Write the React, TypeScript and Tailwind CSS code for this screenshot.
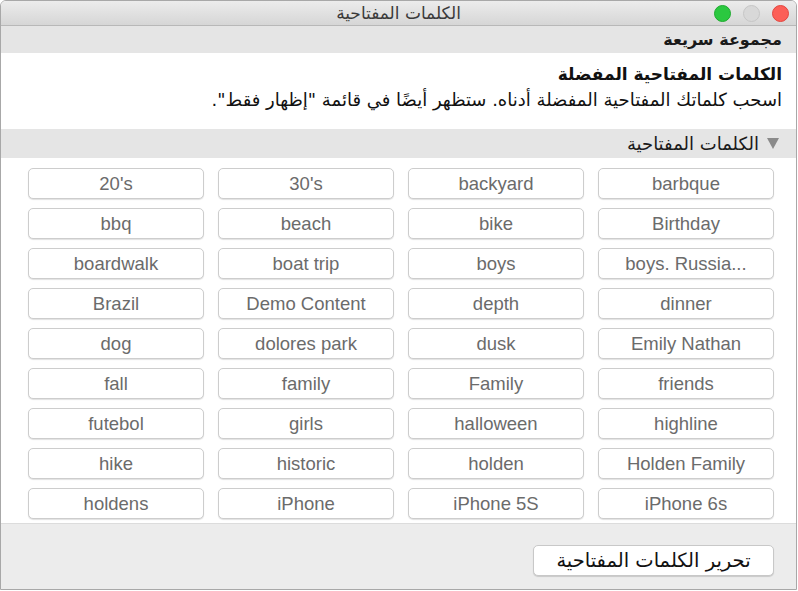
import React from "react";

const keywords = [
  "20's", "30's", "backyard", "barbque",
  "bbq", "beach", "bike", "Birthday",
  "boardwalk", "boat trip", "boys", "boys. Russia...",
  "Brazil", "Demo Content", "depth", "dinner",
  "dog", "dolores park", "dusk", "Emily Nathan",
  "fall", "family", "Family", "friends",
  "futebol", "girls", "halloween", "highline",
  "hike", "historic", "holden", "Holden Family",
  "holdens", "iPhone", "iPhone 5S", "iPhone 6s",
];

const arabic = { fontFamily: '"DejaVu Sans", "Noto Sans", sans-serif' };
const latin = { fontFamily: '"Liberation Sans", Arial, sans-serif' };

export default function App() {
  return (
    <div className="w-[798px] h-[591px] bg-white">
      <div className="w-[797px] h-[590px] border border-[#a8a8a8] rounded-t-[6px] flex flex-col overflow-hidden bg-white">
        {/* Title bar */}
        <div className="h-[25px] shrink-0 relative flex items-center justify-center bg-gradient-to-b from-[#ececec] to-[#d6d6d6] border-b border-[#b8b8b8]">
          <span className="text-[17px] text-[#3a3a3a] leading-none" style={arabic} dir="rtl">
            الكلمات المفتاحية
          </span>
          <div className="absolute right-[7px] top-[4px] flex flex-row-reverse gap-[12px]">
            <div className="w-[17px] h-[17px] rounded-full bg-[#fc5f57] border border-[#e2463f]" />
            <div className="w-[17px] h-[17px] rounded-full bg-[#d8d8d8] border border-[#c6c6c6]" />
            <div className="w-[17px] h-[17px] rounded-full bg-[#2bc840] border border-[#1eab2f]" />
          </div>
        </div>

        {/* Quick group header */}
        <div dir="rtl" className="h-[27px] shrink-0 bg-[#e5e5e5] flex items-center pr-[14px]">
          <span className="text-[16px] font-bold text-[#1a1a1a]" style={arabic}>مجموعة سريعة</span>
        </div>

        {/* Favorites */}
        <div dir="rtl" className="h-[76px] shrink-0 bg-white flex flex-col pr-[14px] pt-[8px]">
          <span className="text-[17px] font-bold text-[#111] leading-[26px]" style={arabic}>
            الكلمات المفتاحية المفضلة
          </span>
          <span className="text-[18px] text-[#111] leading-[26px]" style={arabic}>
            اسحب كلماتك المفتاحية المفضلة أدناه. ستظهر أيضًا في قائمة "إظهار فقط".
          </span>
        </div>

        {/* Keywords header */}
        <div dir="rtl" className="h-[29px] shrink-0 bg-[#e5e5e5] flex items-center pr-[17px] gap-[8px]">
          <svg width="12" height="11" viewBox="0 0 12 11">
            <polygon points="0,0 12,0 6,11" fill="#8a8a8a" />
          </svg>
          <span className="text-[18px] text-[#1a1a1a]" style={arabic}>الكلمات المفتاحية</span>
        </div>

        {/* Grid */}
        <div className="h-[365px] shrink-0 bg-white pl-[27px] pt-[10px]">
          <div className="grid grid-cols-[repeat(4,176px)] gap-x-[14px] gap-y-[9px]">
            {keywords.map((k) => (
              <div
                key={k}
                className="h-[31px] rounded-[5px] border border-[#cdcdcd] bg-white shadow-[0_1px_1px_rgba(0,0,0,0.12)] flex items-center justify-center text-[18.5px] text-[#6b6b6b]"
                style={latin}
              >
                {k}
              </div>
            ))}
          </div>
        </div>

        {/* Bottom */}
        <div className="flex-1 bg-[#ececec] border-t border-[#dcdcdc] flex justify-end pr-[22px] pt-[21px]">
          <div
            dir="rtl"
            className="w-[241px] h-[31px] rounded-[5px] border border-[#c8c8c8] bg-white shadow-[0_1px_1px_rgba(0,0,0,0.15)] flex items-center justify-center text-[19.5px] text-[#111]"
            style={arabic}
          >
            تحرير الكلمات المفتاحية
          </div>
        </div>
      </div>
    </div>
  );
}
